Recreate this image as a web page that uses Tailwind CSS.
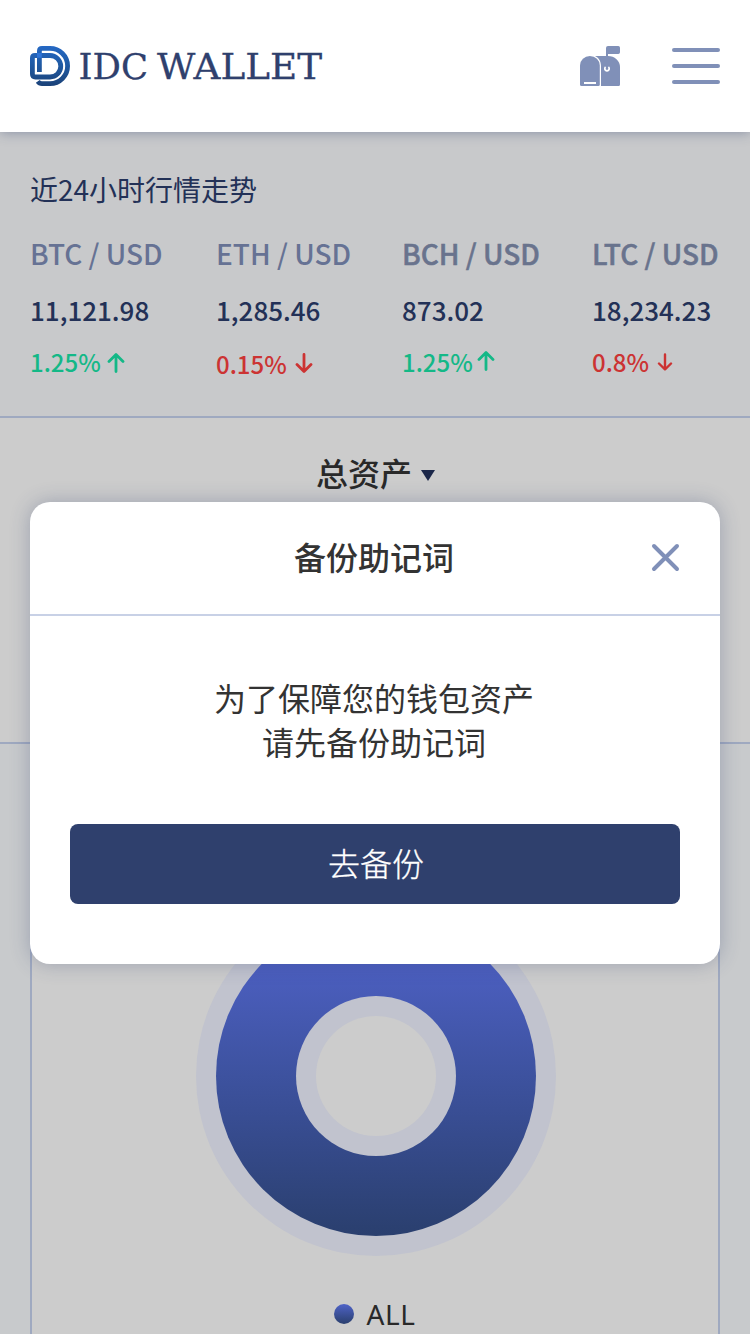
<!DOCTYPE html>
<html lang="zh-CN">
<head>
<meta charset="utf-8">
<title>IDC WALLET</title>
<script src="https://cdn.jsdelivr.net/npm/@tailwindcss/browser@4"></script>
</head>
<body class="bg-[#cccccc] font-['Noto_Sans_CJK_SC',sans-serif] text-[#333333]">
<div class="relative flex h-[1334px] w-[750px] flex-col overflow-hidden">
  <header class="z-10 flex h-[132px] shrink-0 items-center justify-between bg-white px-[30px] shadow-[0_0_12px_rgba(47,64,109,0.45)]">
    <svg width="300" height="60" viewBox="0 -10 300 60" role="img" aria-label="IDC WALLET">
      <defs>
        <linearGradient id="lg" gradientUnits="userSpaceOnUse" x1="0" y1="0" x2="0" y2="40"><stop offset="0" stop-color="#2568c4"/><stop offset=".45" stop-color="#205ba5"/><stop offset="1" stop-color="#1b4278"/></linearGradient>
      </defs>
      <g fill="none" stroke="url(#lg)" stroke-width="4.8">
        <path d="M9.400 26V5Q9.400 2.400 12 2.400H20A17.600 17.600 0 0 1 20 37.600H12Q9.400 37.600 7.800 35.400"/>
        <path d="M18 9.500H5Q2.400 9.500 2.400 12V28Q2.400 31 5.400 31H20A10.750 10.750 0 0 0 20 9.500H15"/>
      </g>
      <path d="M7 7h4.800v4.800H7z" fill="#2e74d8"/>
      <g font-family="DejaVu Serif, serif" font-size="36" fill="#2f406d" stroke="#2f406d" stroke-width=".3">
        <text x="48.500" y="33" textLength="69.500" lengthAdjust="spacingAndGlyphs">IDC</text>
        <text x="127" y="33" textLength="165" lengthAdjust="spacingAndGlyphs">WALLET</text>
      </g>
    </svg>
    <div class="flex items-center gap-[52px]">
      <svg width="40" height="40" viewBox="0 0 40 40" fill="#8090b8">
        <path d="M0 19.500A9.900 9.500 0 0 1 19.800 19.500V38.500Q19.800 40 18.300 40H1.500Q0 40 0 38.500Z"/>
        <path d="M15 10H26V2Q26 0 28 0H38.300Q40 0 40 1.700V6.300Q40 8 38.300 8H28V10A12 11 0 0 1 40 21V38.500Q40 40 38.500 40H21V20C21 15 18.500 11.500 15 10Z"/>
        <path d="M4 36h12v2H4z" fill="white"/>
        <path d="M25.600 21A2.200 2.200 0 1 0 28.400 21" fill="none" stroke="white" stroke-width="1.700"/>
      </svg>
      <div class="flex w-12 flex-col gap-3">
        <div class="h-1 rounded-full bg-[#8090b8]"></div>
        <div class="h-1 rounded-full bg-[#8090b8]"></div>
        <div class="h-1 rounded-full bg-[#8090b8]"></div>
      </div>
    </div>
  </header>

  <section class="h-[286px] shrink-0 border-b-2 border-[#9fa9c0] bg-[#c8c9cb] pl-[30px] pt-[36px] text-[28px] text-[#233157]">
    <h2 class="leading-[42px]">近24小时行情走势</h2>
    <div class="mt-[23px] grid grid-cols-[186px_186px_190px_1fr]">
      <div>
        <div class="leading-[40px] font-medium text-[#667294]">BTC / USD</div>
        <div class="mt-[17px] text-[26px] leading-[40px] font-medium">11,121.98</div>
        <div class="mt-[12px] flex items-center gap-[6px] text-[24px] leading-[40px] font-medium text-[#14b887]">1.25%<svg class="mt-[2px]" width="18" height="20" viewBox="0 0 18 20" fill="none" stroke="currentColor" stroke-width="2.800" stroke-linecap="round" stroke-linejoin="round"><path d="M9 18.500V1.800M2 8.500L9 1.500L16 8.500"/></svg></div>
      </div>
      <div>
        <div class="leading-[40px] font-medium text-[#667294]">ETH / USD</div>
        <div class="mt-[17px] text-[26px] leading-[40px] font-medium">1,285.46</div>
        <div class="mt-[14px] flex items-center gap-[8px] text-[24px] leading-[40px] font-medium text-[#cc3333]">0.15%<svg class="mb-[2px]" width="18" height="20" viewBox="0 0 18 20" fill="none" stroke="currentColor" stroke-width="2.800" stroke-linecap="round" stroke-linejoin="round"><path d="M9 1.500V18.200M2 11.500L9 18.500L16 11.500"/></svg></div>
      </div>
      <div>
        <div class="leading-[40px] font-medium text-[#69738d] [-webkit-text-stroke:0.5px_#69738d]">BCH / USD</div>
        <div class="mt-[17px] text-[26px] leading-[40px] font-medium">873.02</div>
        <div class="mt-[12px] flex items-center gap-[4px] text-[24px] leading-[40px] font-medium text-[#14b887]">1.25%<svg class="mb-[2px]" width="18" height="20" viewBox="0 0 18 20" fill="none" stroke="currentColor" stroke-width="2.800" stroke-linecap="round" stroke-linejoin="round"><path d="M9 18.500V1.800M2 8.500L9 1.500L16 8.500"/></svg></div>
      </div>
      <div>
        <div class="leading-[40px] font-medium text-[#69738d] [-webkit-text-stroke:0.5px_#69738d]">LTC / USD</div>
        <div class="mt-[17px] text-[26px] leading-[40px] font-medium">18,234.23</div>
        <div class="mt-[12px] flex items-center gap-[8px] text-[24px] leading-[40px] font-medium text-[#cc3333]">0.8%<svg width="16" height="18" viewBox="0 0 16 18" fill="none" stroke="currentColor" stroke-width="2.400" stroke-linecap="round" stroke-linejoin="round"><path d="M8 1.500V16.200M2 10.500L8 16.500L14 10.500"/></svg></div>
      </div>
    </div>
  </section>

  <section class="flex h-[326px] shrink-0 items-start justify-center gap-[9px] border-b-2 border-[#9fa9c0] bg-[#cccccc] pl-[1px] pt-[30px]">
    <span class="text-[32px] leading-[48px] font-medium text-[#292929]">总资产</span>
    <svg class="mt-[22px]" width="14" height="11" viewBox="0 0 14 11" fill="#1b2749"><path d="M0 0H14L7 11Z"/></svg>
  </section>

  <section class="flex flex-1 bg-[#c8cacc] px-[30px]">
    <div class="flex flex-1 flex-col items-center border-x-2 border-[#9fa9c0] bg-[#cccccc] pl-[2px] pt-[152px]">
      <svg class="shrink-0" width="360" height="360" viewBox="0 0 360 360">
        <defs><linearGradient id="dg" x1="0" y1="0" x2="0" y2="1"><stop offset="0" stop-color="#4f63c8"/><stop offset=".15" stop-color="#4c5fc0"/><stop offset=".5" stop-color="#3d529f"/><stop offset="1" stop-color="#2a3f6e"/></linearGradient></defs>
        <circle cx="180" cy="180" r="180" fill="#c1c3ce"/>
        <circle cx="180" cy="180" r="160" fill="url(#dg)"/>
        <circle cx="180" cy="180" r="80" fill="#c1c3ce"/>
        <circle cx="180" cy="180" r="60" fill="#cccccc"/>
      </svg>
      <div class="mt-[38px] flex items-center gap-[12px] pr-[2px]">
        <div class="size-5 rounded-full bg-linear-to-b from-[#4f63c8] to-[#2a3f6e]"></div>
        <span class="font-['Noto_Sans',sans-serif] text-[28px] leading-[40px] tracking-[0.6px] text-[#292929]">ALL</span>
      </div>
    </div>
  </section>

  <div role="dialog" class="absolute left-[30px] top-[502px] z-20 flex h-[462px] w-[690px] flex-col rounded-[20px] bg-white shadow-[0_0_20px_rgba(47,64,109,0.3)]">
    <div class="grid h-[114px] shrink-0 grid-cols-[1fr_auto_1fr] items-center border-b-2 border-[#c8d1e6] px-[40px] pb-[2px]">
      <span></span>
      <h3 class="pb-[2px] pr-[2px] text-[32px] leading-[44px] font-medium">备份助记词</h3>
      <svg class="justify-self-end" width="29" height="29" viewBox="0 0 29 29" fill="none" stroke="#8090b8" stroke-width="4" stroke-linecap="round"><path d="M3 3L26 26M26 3L3 26"/></svg>
    </div>
    <p class="mt-[59px] pr-[2px] text-center text-[32px] leading-[44px]">为了保障您的钱包资产<br>请先备份助记词</p>
    <button class="mx-[40px] mt-[61px] h-[80px] rounded-[8px] bg-[#2f406d] pb-[4px] pl-[2px] text-[32px] font-light text-white [-webkit-text-stroke:0.3px_white]">去备份</button>
  </div>
</div>
</body>
</html>
